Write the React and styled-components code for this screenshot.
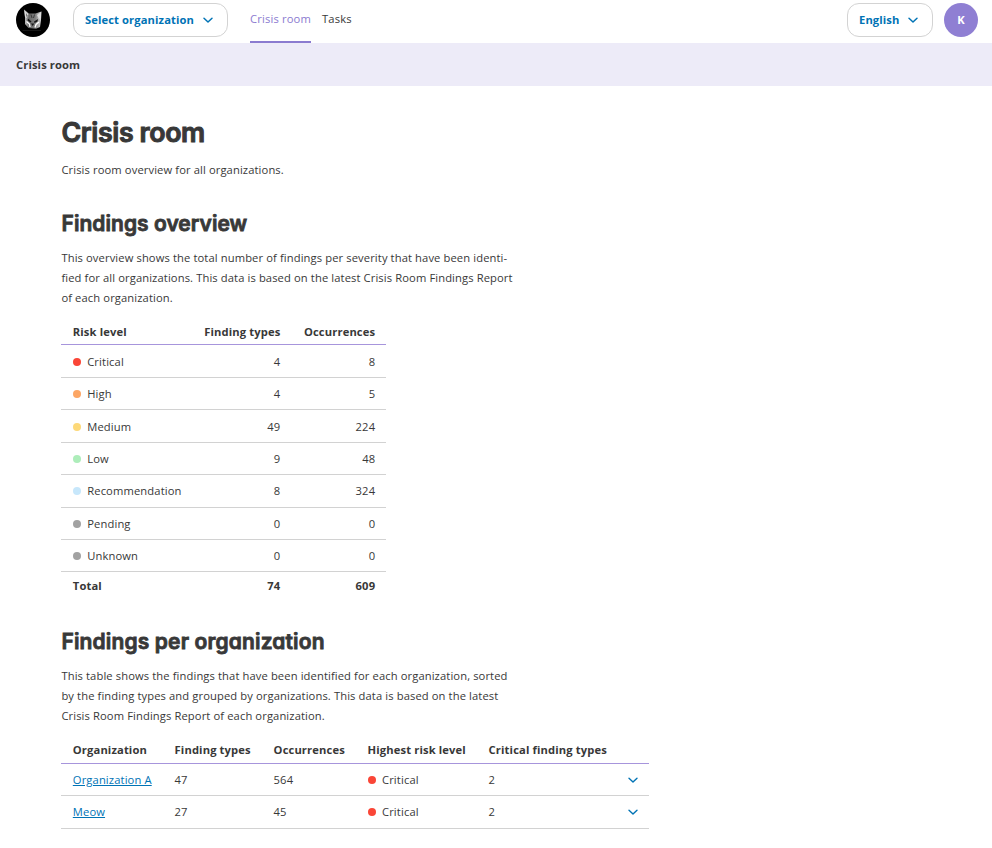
import React from "react";
import styled, { createGlobalStyle } from "styled-components";

const GlobalStyle = createGlobalStyle`
  *, *::before, *::after { box-sizing: border-box; }
  body {
    margin: 0;
    background: #fff;
    color: #383838;
    font: 400 11.2px/20px "Open Sans", "Noto Sans", sans-serif;
    letter-spacing: 0.11px;
  }
`;

const Header = styled.header`
  display: flex;
  align-items: flex-start;
  height: 43px;
  padding: 3px 14px 0 16px;
`;

const Logo = styled.svg`
  display: block;
  width: 34px;
  height: 34px;
  margin-right: 23px;
`;

const DropdownButton = styled.button`
  display: flex;
  align-items: center;
  justify-content: space-between;
  width: ${(p) => p.$width}px;
  height: 34px;
  padding: 0 13px 0 11px;
  border: 1px solid #d3d3d3;
  border-radius: 12px;
  background: #fff;
  color: #0073b5;
  font: inherit;
  font-weight: 700;
  letter-spacing: 0.11px;
  white-space: nowrap;
`;

const ChevronIcon = styled.svg`
  display: block;
  width: 12px;
  height: 12px;
  fill: none;
  stroke: #0073b5;
  stroke-width: ${(p) => p.$weight};
  stroke-linecap: round;
  stroke-linejoin: round;
`;

const Nav = styled.nav`
  display: flex;
  gap: 11px;
  height: 40px;
  margin-left: 22px;
`;

const NavLink = styled.a`
  height: 40px;
  padding-top: 6px;
  color: ${(p) => (p.$active ? "#8b7bd0" : "#383838")};
  border-bottom: 2px solid ${(p) => (p.$active ? "#8b7bd0" : "transparent")};
  letter-spacing: 0.16px;
  white-space: nowrap;
`;

const UserTools = styled.div`
  display: flex;
  gap: 11px;
  margin-left: auto;
`;

const Avatar = styled.div`
  width: 34px;
  height: 34px;
  border-radius: 50%;
  background: #8f7fd3;
  color: #fff;
  font-weight: 700;
  line-height: 34px;
  text-align: center;
`;

const Breadcrumb = styled.div`
  height: 43px;
  padding-left: 16px;
  background: #edebf8;
  font-weight: 700;
  line-height: 44px;
`;

const Main = styled.main`
  padding: 27px 0 0 61px;
`;

const Title = styled.h1`
  margin: 0;
  padding-left: 0.5px;
  font: 600 26.8px/38px Inter, sans-serif;
  font-feature-settings: "cv11";
  letter-spacing: -0.4px;
  -webkit-text-stroke: 1px #383838;
`;

const SectionTitle = styled.h2`
  margin: ${(p) => p.$top}px 0 0;
  padding-left: 0.5px;
  font: 600 21px/30px Inter, sans-serif;
  font-feature-settings: "cv11";
  letter-spacing: ${(p) => p.$spacing}px;
  -webkit-text-stroke: 0.8px #383838;
`;

const Paragraph = styled.p`
  margin: ${(p) => p.$top}px 0 0;
  padding-left: 0.4px;
  white-space: nowrap;
`;

const Table = styled.div`
  width: ${(p) => p.$width}px;
  margin-top: 10px;
  letter-spacing: 0.13px;
`;

const Row = styled.div`
  display: grid;
  grid-template-columns: ${(p) => p.$columns};
  align-items: center;
  height: ${(p) => p.$height}px;
  padding-top: ${(p) => p.$nudge || 0}px;
  border-bottom: 1px solid #d2d2d2;
`;

const HeadRow = styled(Row)`
  border-bottom-color: #a795dc;
  font-weight: 700;
`;

const TotalRow = styled(Row)`
  border-bottom: 0;
  font-weight: 700;
`;

const Cell = styled.span`
  display: flex;
  align-items: center;
  justify-content: ${(p) => (p.$right ? "flex-end" : "flex-start")};
  padding: ${(p) => (p.$right ? "0 10.8px 0 0" : "0 0 0 11.8px")};
  white-space: nowrap;
`;

const ToggleCell = styled(Cell)`
  padding-right: 9.6px;
`;

const OrgLink = styled.a`
  color: #0073b5;
  text-decoration: underline;
`;

const Dot = styled.i`
  width: 8px;
  height: 8px;
  margin: 0 6.4px 0 0;
  border-radius: 50%;
  background: ${(p) => p.$color};
`;

const riskColumns = "131.3px 98.9px 94.8px";
const orgColumns = "101.8px 99px 94px 121px 144px 28.2px";

const risks = [
  ["Critical", "#fa4637", 4, 8, 33, 1],
  ["High", "#fca665", 4, 5, 32, 0],
  ["Medium", "#fdd979", 49, 224, 33, 1],
  ["Low", "#adedba", 9, 48, 32, 0],
  ["Recommendation", "#c7e7fb", 8, 324, 33, 0],
  ["Pending", "#a2a2a2", 0, 0, 32, 0],
  ["Unknown", "#a2a2a2", 0, 0, 32, 0],
];

const organizations = [
  ["Organization A", 47, 564, 32],
  ["Meow", 27, 45, 33],
];

function Chevron({ weight = 1.5 }) {
  return (
    <ChevronIcon viewBox="0 0 12 12" $weight={weight}>
      <path d="M2 4.3 L6 8 L10 4.3" />
    </ChevronIcon>
  );
}

function CatLogo() {
  return (
    <Logo viewBox="0 0 34 34">
      <defs>
        <linearGradient id="fur" x1="0" x2="1" y1="0" y2="0">
          <stop offset="0" stopColor="#d0d0d0" />
          <stop offset=".3" stopColor="#6a6a6a" />
          <stop offset=".65" stopColor="#808080" />
          <stop offset="1" stopColor="#e0e0e0" />
        </linearGradient>
        <filter id="soft">
          <feGaussianBlur stdDeviation=".4" />
        </filter>
      </defs>
      <circle cx="17" cy="17" r="17" fill="#000" />
      <g filter="url(#soft)">
        <path d="M8 6.5 L13 10.5 L19.5 10.5 L25.5 8.5 L25 17 L24 24 L20 25.8 L12.5 25 L9 21 L9 14Z" fill="url(#fur)" />
        <path d="M8.5 7.5 L12.5 11 L10.5 15 L9 14Z M25 9.5 L21 12 L23 16 L25 15Z" fill="#dcdcdc" />
        <path d="M10 10 L11.5 12.5 L10.5 14Z" fill="#555" />
        <path d="M12 15.5 L15.5 18.5 L14.5 19.5 L11.5 17.5Z M18 18.5 L22 16 L21.5 18.5 L18.5 20Z" fill="#181818" />
        <path d="M15 11.5 L16 15 M18.5 11.5 L17.5 15" fill="none" stroke="#333" strokeWidth=".9" />
        <path d="M15 20.5 L18.3 20.5 L16.7 23Z" fill="#181818" />
        <path d="M10.5 18.5 L13.5 21 L14 24 M23 19 L20 21.5 L19 24.5" fill="none" stroke="#fff" strokeWidth="1.3" />
      </g>
      <path d="M6.5 27.5 H25" stroke="#222" strokeWidth=".7" />
    </Logo>
  );
}

export default function App() {
  return (
    <>
      <GlobalStyle />
      <Header>
        <CatLogo />
        <DropdownButton $width={155}>
          Select organization
          <Chevron />
        </DropdownButton>
        <Nav>
          <NavLink $active>Crisis room</NavLink>
          <NavLink>Tasks</NavLink>
        </Nav>
        <UserTools>
          <DropdownButton $width={86}>
            English
            <Chevron />
          </DropdownButton>
          <Avatar>K</Avatar>
        </UserTools>
      </Header>
      <Breadcrumb>Crisis room</Breadcrumb>
      <Main>
        <Title>Crisis room</Title>
        <Paragraph $top={9}>Crisis room overview for all organizations.</Paragraph>

        <SectionTitle $top={29} $spacing={0.04}>Findings overview</SectionTitle>
        <Paragraph $top={9}>
          This overview shows the total number of findings per severity that have been identi-
          <br />
          fied for all organizations. This data is based on the latest Crisis Room Findings Report
          <br />
          of each organization.
        </Paragraph>
        <Table $width={325}>
          <HeadRow $columns={riskColumns} $height={27} $nudge={1}>
            <Cell>Risk level</Cell>
            <Cell $right>Finding types</Cell>
            <Cell $right>Occurrences</Cell>
          </HeadRow>
          {risks.map(([name, color, types, occurrences, height, nudge]) => (
            <Row key={name} $columns={riskColumns} $height={height} $nudge={nudge}>
              <Cell>
                <Dot $color={color} />
                {name}
              </Cell>
              <Cell $right>{types}</Cell>
              <Cell $right>{occurrences}</Cell>
            </Row>
          ))}
          <TotalRow $columns={riskColumns} $height={28}>
            <Cell>Total</Cell>
            <Cell $right>74</Cell>
            <Cell $right>609</Cell>
          </TotalRow>
        </Table>

        <SectionTitle $top={27} $spacing={0.14}>Findings per organization</SectionTitle>
        <Paragraph $top={9}>
          This table shows the findings that have been identified for each organization, sorted
          <br />
          by the finding types and grouped by organizations. This data is based on the latest
          <br />
          Crisis Room Findings Report of each organization.
        </Paragraph>
        <Table $width={588}>
          <HeadRow $columns={orgColumns} $height={28}>
            <Cell>Organization</Cell>
            <Cell>Finding types</Cell>
            <Cell>Occurrences</Cell>
            <Cell>Highest risk level</Cell>
            <Cell>Critical finding types</Cell>
          </HeadRow>
          {organizations.map(([name, types, occurrences, height]) => (
            <Row key={name} $columns={orgColumns} $height={height}>
              <Cell>
                <OrgLink>{name}</OrgLink>
              </Cell>
              <Cell>{types}</Cell>
              <Cell>{occurrences}</Cell>
              <Cell>
                <Dot $color="#fa4637" />
                Critical
              </Cell>
              <Cell>2</Cell>
              <ToggleCell $right>
                <Chevron weight={1.4} />
              </ToggleCell>
            </Row>
          ))}
        </Table>
      </Main>
    </>
  );
}
